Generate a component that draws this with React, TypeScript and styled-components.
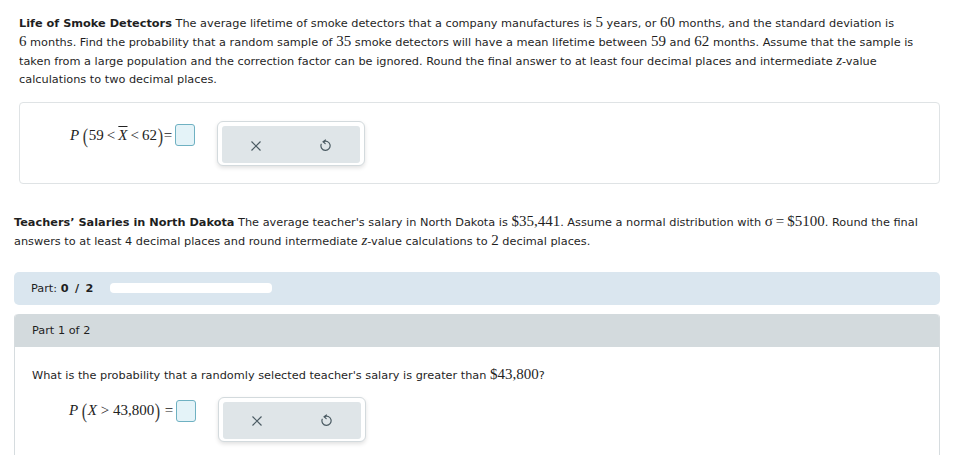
import React from "react";
import styled, { createGlobalStyle } from "styled-components";

const Global = createGlobalStyle`
  html, body { margin: 0; padding: 0; background: #fff; }
  body { font-family: "DejaVu Sans", Verdana, sans-serif; color: #1f1f1f; overflow: hidden; }
`;

const Page = styled.div`
  padding: 15px 23px 0 14px;
  width: 926px;
`;

const Problem = styled.div<{ $indent?: number }>`
  padding-left: ${(p) => p.$indent ?? 0}px;
`;

const Statement = styled.p`
  margin: 0;
  font-size: 11.3px;
  line-height: 18.8px;
`;

const Title = styled.b`
  font-weight: bold;
`;

const M = styled.span`
  font-family: "Liberation Serif", "Times New Roman", serif;
  font-size: 15px;
  line-height: 1;
`;

const MI = styled(M)`
  font-style: italic;
`;

const AnswerCard = styled.div`
  margin-top: 12px;
  border: 1px solid #dfe3e5;
  border-radius: 4px;
  height: 82px;
  display: flex;
  align-items: flex-start;
  padding: 18px 0 0 50px;
  box-sizing: border-box;
`;

const Formula = styled.div`
  display: flex;
  align-items: center;
  font-family: "Liberation Serif", "Times New Roman", serif;
  font-size: 15px;
  color: #222;
  height: 26px;
  margin-top: 1px;
`;

const Paren = styled.span`
  font-size: 20px;
  display: inline-block;
  transform: scale(0.8, 1.1);
  color: #333;
`;

const Bar = styled.span`
  text-decoration: overline;
  font-style: italic;
`;

const InputBox = styled.span`
  display: inline-block;
  width: 18px;
  height: 20px;
  border: 1px solid #6fb1c2;
  background: #e4f3f8;
  border-radius: 3px;
  margin-left: 3px;
`;

const ToolOuter = styled.div`
  margin-left: 22px;
  width: 148px;
  height: 45px;
  border: 1px solid #d3dadd;
  border-radius: 6px;
  background: #fff;
  box-shadow: 0 2px 4px rgba(0, 0, 0, 0.12);
  padding: 4px;
  box-sizing: border-box;
`;

const ToolInner = styled.div`
  height: 100%;
  background: #dfe5e8;
  border-radius: 3px;
  display: flex;
  align-items: center;
  justify-content: space-between;
  padding: 2px 25px 0 24px;
`;

const IconBtn = styled.span`
  display: flex;
  align-items: center;
  justify-content: center;
  width: 20px;
  height: 20px;
  color: #4b5b63;
`;

const Section2 = styled.div`
  margin-top: 30px;
`;

const PartBar = styled.div`
  margin-top: 20px;
  height: 33px;
  background: #dae6ef;
  border-radius: 5px;
  display: flex;
  align-items: center;
  padding-left: 17px;
  font-size: 11.3px;
`;

const PartCount = styled.b`
  word-spacing: 2.5px;
`;

const Progress = styled.div`
  margin-left: 17px;
  width: 162px;
  height: 10px;
  background: #fff;
  border-radius: 4px;
`;

const PartCard = styled.div`
  margin-top: 9px;
  border: 1px solid #d6dcdf;
  border-top: none;
  border-radius: 4px 4px 0 0;
  height: 150px;
`;

const PartHeader = styled.div`
  height: 33px;
  background: #d3dadd;
  border-radius: 4px 4px 0 0;
  display: flex;
  align-items: center;
  padding-left: 17px;
  font-size: 11.3px;
`;

const PartBody = styled.div`
  padding: 20px 17px 0;
`;

const Question = styled.p`
  margin: 0;
  font-size: 11.3px;
  line-height: 18px;
`;

const Row = styled.div`
  display: flex;
  align-items: flex-start;
  padding-left: 37px;
  margin-top: 12px;
`;

const CloseIcon = () => (
  <svg width="12" height="12" viewBox="0 0 12 12">
    <path d="M1.5 1.5 L10.5 10.5 M10.5 1.5 L1.5 10.5" stroke="#4b5b63" strokeWidth="1.2" fill="none" />
  </svg>
);

const UndoIcon = () => (
  <svg width="12" height="14" viewBox="0 0 12 14">
    <path d="M4.2 2.8 A4.6 4.6 0 1 1 2.2 5.2" stroke="#4b5b63" strokeWidth="1.2" fill="none" strokeLinecap="round" />
    <path d="M6.5 1 L4.2 2.8 L6.2 4.6" stroke="#4b5b63" strokeWidth="1.2" fill="none" strokeLinecap="round" strokeLinejoin="round" />
  </svg>
);

const Tools = () => (
  <ToolOuter>
    <ToolInner>
      <IconBtn>
        <CloseIcon />
      </IconBtn>
      <IconBtn>
        <UndoIcon />
      </IconBtn>
    </ToolInner>
  </ToolOuter>
);

export default function App() {
  return (
    <>
      <Global />
      <Page>
        <Problem $indent={5}>
          <Statement>
            <Title>Life of Smoke Detectors</Title> The average lifetime of smoke detectors that a company manufactures is <M>5</M> years, or <M>60</M> months, and the standard deviation is <M>6</M>&nbsp;months. Find the probability that a random sample of <M>35</M> smoke detectors will have a mean lifetime between <M>59</M> and <M>62</M> months. Assume that the sample is taken from a large population and the correction factor can be ignored. Round the final answer to at least four decimal places and intermediate <MI>z</MI>-value calculations to two decimal places.
          </Statement>
          <AnswerCard>
            <Formula>
              <i>P</i>&thinsp;
              <Paren>(</Paren>59&thinsp;&lt;&thinsp;<Bar>X</Bar>&thinsp;&lt;&thinsp;62<Paren>)</Paren>=
              <InputBox />
            </Formula>
            <Tools />
          </AnswerCard>
        </Problem>
        <Section2>
          <Statement>
            <Title>Teachers’ Salaries in North Dakota</Title> The average teacher's salary in North Dakota is <M>$35,441</M>. Assume a normal distribution with <M>σ&thinsp;=&thinsp;$5100</M>. Round the final answers to at least 4 decimal places and round intermediate <MI>z</MI>-value calculations to <M>2</M> decimal places.
          </Statement>
          <PartBar>
            Part:&nbsp;<PartCount>0 / 2</PartCount>
            <Progress />
          </PartBar>
          <PartCard>
            <PartHeader>Part 1 of 2</PartHeader>
            <PartBody>
              <Question>
                What is the probability that a randomly selected teacher's salary is greater than <M>$43,800</M>?
              </Question>
              <Row>
                <Formula>
                  <i>P</i>&thinsp;
                  <Paren>(</Paren><i>X</i>&nbsp;&gt;&nbsp;43,800<Paren>)</Paren>&nbsp;=
                  <InputBox />
                </Formula>
                <Tools />
              </Row>
            </PartBody>
          </PartCard>
        </Section2>
      </Page>
    </>
  );
}
